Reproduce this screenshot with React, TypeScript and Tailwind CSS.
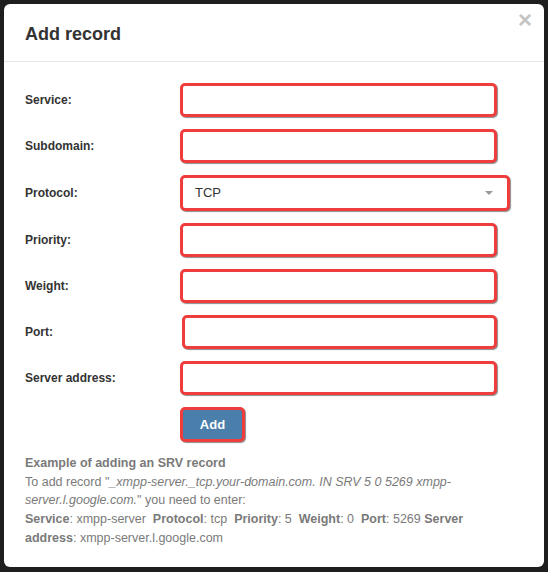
const fields = [
  { label: 'Service:', kind: 'input' },
  { label: 'Subdomain:', kind: 'input' },
  { label: 'Protocol:', kind: 'select' },
  { label: 'Priority:', kind: 'input' },
  { label: 'Weight:', kind: 'input' },
  { label: 'Port:', kind: 'port' },
  { label: 'Server address:', kind: 'input' },
];

const ring = 'border-[3px] border-[#ef3d3d] rounded-[5px] shadow-[1px_1px_1px_rgba(0,0,0,0.45)] bg-white';

export default function App() {
  return (
    <main
      className="w-[548px] h-[572px] bg-[#1e1e1e] p-[4px]"
      style={{ fontFamily: '"Liberation Sans", Arial, sans-serif' }}
    >
      <div className="w-[540px] h-[563px] bg-white rounded-[6px] flex flex-col">
        {/* Header */}
        <div className="relative h-[58px] border-b border-[#e5e5e5] px-[21px] flex items-center">
          <h1 className="text-[18px] font-bold text-[#333] pt-[3px]">Add record</h1>
          <span className="absolute right-[12px] top-[4px] text-[24px] font-bold text-[#c4c4c4] leading-none">×</span>
        </div>

        {/* Form */}
        <div className="pt-[21px] px-[21px] flex flex-col gap-[12px]">
          {fields.map((f) => (
            <div key={f.label} className="flex items-center">
              <label className="w-[155px] text-[12px] font-bold text-[#333]">{f.label}</label>
              {f.kind === 'select' ? (
                <div className={`${ring} w-[330px] h-[36px] flex items-center justify-between pl-[12px] pr-[14px]`}>
                  <span className="text-[13px] text-[#333]">TCP</span>
                  <span className="w-0 h-0 border-l-[4px] border-r-[4px] border-t-[4px] border-l-transparent border-r-transparent border-t-[#999]" />
                </div>
              ) : (
                <div className={`${ring} h-[34px] ${f.kind === 'port' ? 'ml-[2px] w-[315px]' : 'w-[317px]'}`} />
              )}
            </div>
          ))}
          <div className="pl-[155px]">
            <button className="w-[65px] h-[35px] bg-[#4a7eab] border-[3px] border-[#ef3d3d] rounded-[5px] shadow-[1px_1px_1px_rgba(0,0,0,0.45)] text-white text-[13px] font-bold">
              Add
            </button>
          </div>
        </div>

        {/* Example */}
        <div className="pl-[21px] pr-[30px] pt-[12px] text-[12.5px] leading-[18.7px] text-[#7a7a7a]">
          <p className="font-bold">Example of adding an SRV record</p>
          <p>
            To add record "<i>_xmpp-server._tcp.your-domain.com. IN SRV 5 0 5269 xmpp-server.l.google.com.</i>" you need to enter:
          </p>
          <p>
            <b>Service</b>: xmpp-server&nbsp; <b>Protocol</b>: tcp&nbsp; <b>Priority</b>: 5&nbsp; <b>Weight</b>: 0&nbsp; <b>Port</b>: 5269 <b>Server</b> <b>address</b>: xmpp-server.l.google.com
          </p>
        </div>
      </div>
    </main>
  );
}
